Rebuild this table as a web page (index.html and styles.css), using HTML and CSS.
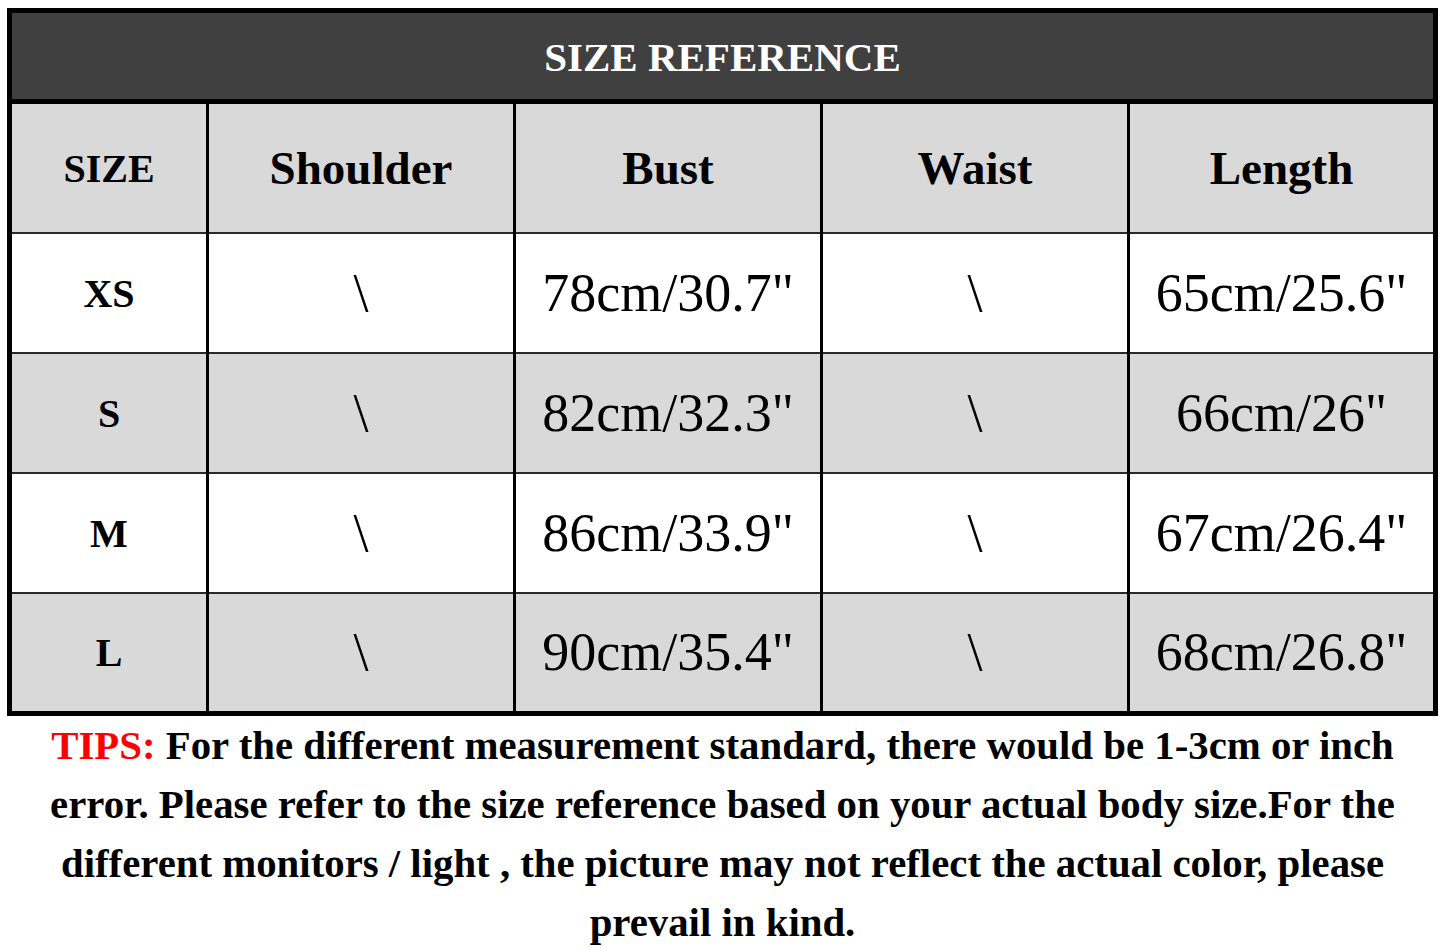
FILE: index.html
```html
<!DOCTYPE html>
<html lang="en">

<head>
    <meta charset="UTF-8">
    <meta name="viewport" content="width=device-width, initial-scale=1.0">
    <title>Size Reference</title>
    <link rel="stylesheet" href="styles.css">
</head>

<body>
    <div class="wrap">
        <table class="size_table">
            <colgroup>
                <col class="c_size">
                <col>
                <col>
                <col>
                <col>
            </colgroup>
            <thead>
                <tr>
                    <th colspan="5" class="title">SIZE REFERENCE</th>
                </tr>
                <tr class="head">
                    <th class="size_col">SIZE</th>
                    <th>Shoulder</th>
                    <th>Bust</th>
                    <th>Waist</th>
                    <th>Length</th>
                </tr>
            </thead>
            <tbody>
                <tr>
                    <th>XS</th>
                    <td>\</td>
                    <td>78cm/30.7"</td>
                    <td>\</td>
                    <td>65cm/25.6"</td>
                </tr>
                <tr class="grey">
                    <th>S</th>
                    <td>\</td>
                    <td>82cm/32.3"</td>
                    <td>\</td>
                    <td>66cm/26"</td>
                </tr>
                <tr>
                    <th>M</th>
                    <td>\</td>
                    <td>86cm/33.9"</td>
                    <td>\</td>
                    <td>67cm/26.4"</td>
                </tr>
                <tr class="grey">
                    <th>L</th>
                    <td>\</td>
                    <td>90cm/35.4"</td>
                    <td>\</td>
                    <td>68cm/26.8"</td>
                </tr>
            </tbody>
        </table>
        <p class="tips">
            <span class="red">TIPS:</span> For the different measurement standard, there would be 1-3cm or inch<br>
            error. Please refer to the size reference based on your actual body size.For the<br>
            different monitors / light , the picture may not reflect the actual color, please<br>
            prevail in kind.
        </p>
    </div>
</body>

</html>
```

FILE: styles.css
```css
* {
    margin: 0;
    padding: 0;
}

body {
    background: #fff;
    color: #000;
    font-family: "Liberation Serif", "Times New Roman", serif;
}

.wrap {
    width: 1431px;
    padding: 8px 0 0 7px;
}

.size_table {
    width: 1431px;
    border-collapse: collapse;
    border: 5px solid #000;
    table-layout: fixed;
}

.size_table .c_size {
    width: 198px;
}

.size_table th,
.size_table td {
    text-align: center;
    vertical-align: middle;
    border-left: 3px solid #000;
    border-right: 3px solid #000;
    border-bottom: 2px solid #2a2a2a;
}

.size_table .title {
    height: 84px;
    background: #404040;
    color: #fff;
    font-size: 41px;
    font-weight: bold;
    border-bottom: 5px solid #000;
    padding-top: 2px;
}

.size_table .head th {
    height: 128px;
    background: #d9d9d9;
    font-size: 47px;
}

.size_table .head .size_col {
    font-size: 40px;
}

.size_table tbody th {
    font-size: 40px;
}

.size_table tbody td {
    font-size: 54px;
    font-weight: normal;
}

.size_table tbody tr {
    height: 120px;
    background: #fff;
}

.size_table tbody tr.grey {
    background: #d9d9d9;
}

.tips {
    width: 1431px;
    margin-top: 0;
    text-align: center;
    font-size: 40.8px;
    font-weight: bold;
    line-height: 59px;
}

.tips .red {
    color: #f00;
}
```
